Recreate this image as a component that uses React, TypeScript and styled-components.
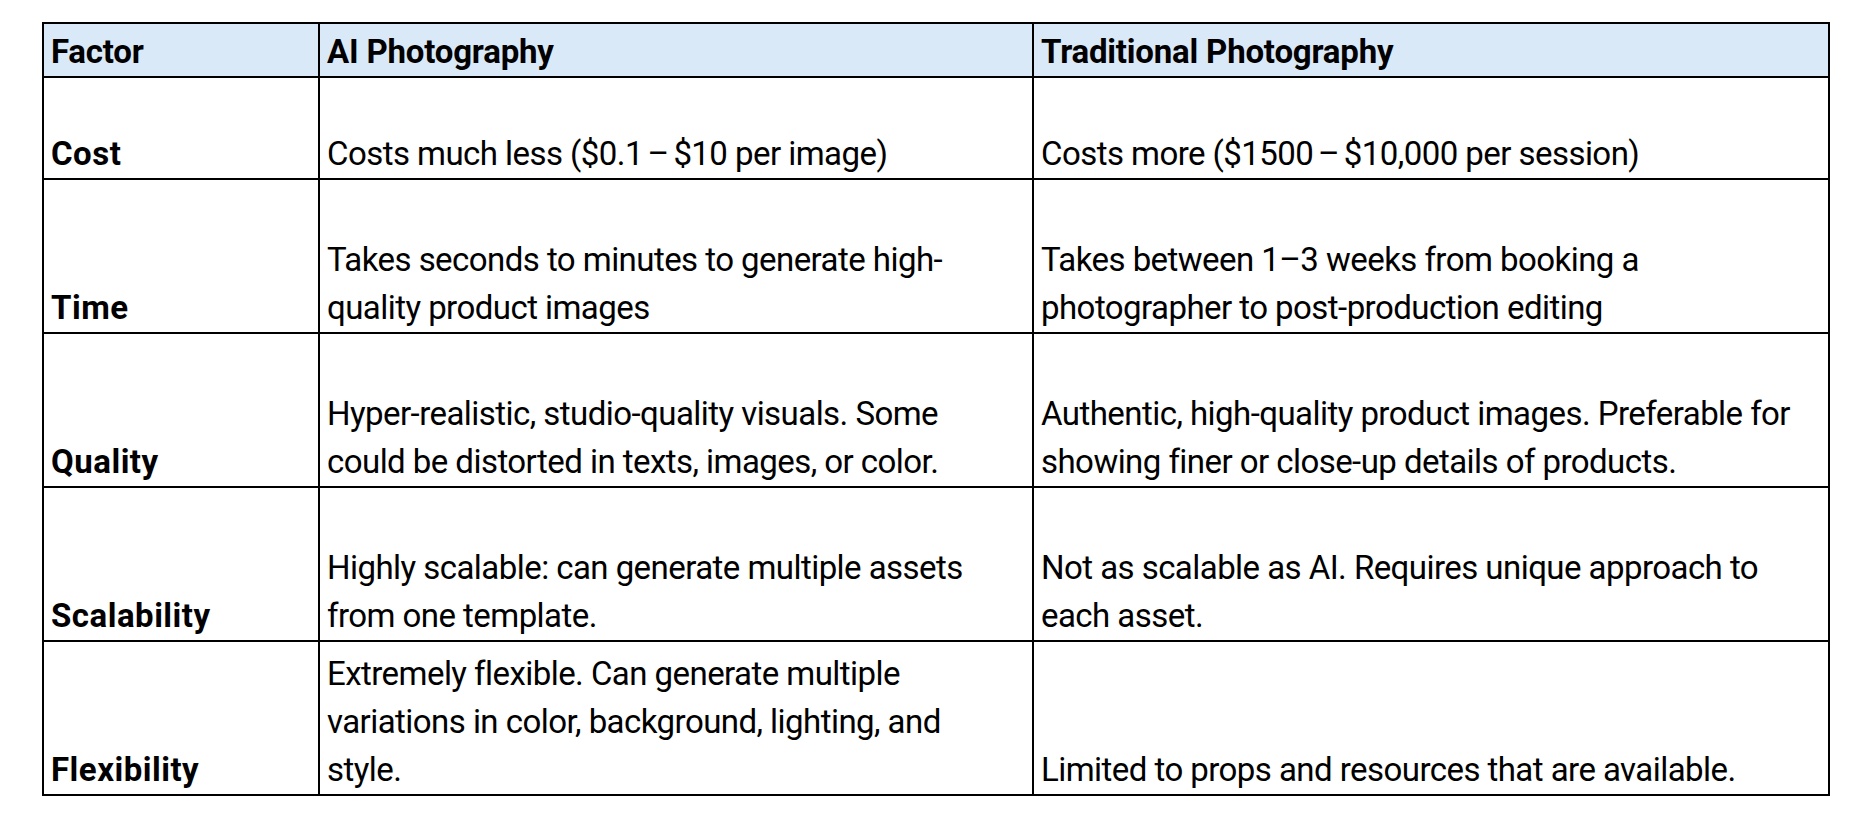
import { FC, ReactNode } from "react";
import styled, { createGlobalStyle } from "styled-components";

const GlobalStyle = createGlobalStyle`
  html, body {
    margin: 0;
    padding: 0;
    background: #ffffff;
  }
`;

const Page = styled.div`
  padding: 22px 0 0 42px;
  font-family: Roboto, "Liberation Sans", sans-serif;
  color: #000;
`;

const Table = styled.table`
  width: 1788px;
  table-layout: fixed;
  border-collapse: collapse;
  border: 2px solid #000;
  font-size: 33px;
`;

const HeadCell = styled.th`
  height: 52px;
  padding: 0 7px;
  background: #dae9f8;
  border: 2px solid #000;
  text-align: left;
  vertical-align: bottom;
  font-weight: 700;
  line-height: 48px;
  letter-spacing: -0.2px;
  white-space: nowrap;
`;

const BodyRow = styled.tr<{ $height: number }>`
  height: ${(p) => p.$height}px;
`;

const Cell = styled.td<{ $bold?: boolean }>`
  padding: 0 7px;
  border: 2px solid #000;
  vertical-align: bottom;
  line-height: 48px;
  white-space: nowrap;
  font-weight: ${(p) => (p.$bold ? 700 : 400)};
  letter-spacing: ${(p) => (p.$bold ? "0.5px" : "-0.55px")};
`;

const Line = styled.div`
  display: block;
`;

// the en dash between prices sits tighter than a normal word gap
const Dash = styled.span`
  word-spacing: -3px;
`;

// each cell's text is stored line by line so the wraps match the document
type Row = {
  factor: string;
  ai: ReactNode[];
  traditional: ReactNode[];
  height: number;
};

const rows: Row[] = [
  {
    factor: "Cost",
    ai: [
      <>
        Costs much less ($0.1<Dash> – </Dash>$10 per image)
      </>,
    ],
    traditional: [
      <>
        Costs more ($1500<Dash> – </Dash>$10,000 per session)
      </>,
    ],
    height: 102,
  },
  {
    factor: "Time",
    ai: ["Takes seconds to minutes to generate high-", "quality product images"],
    traditional: ["Takes between 1–3 weeks from booking a", "photographer to post-production editing"],
    height: 154,
  },
  {
    factor: "Quality",
    ai: ["Hyper-realistic, studio-quality visuals. Some", "could be distorted in texts, images, or color."],
    traditional: [
      "Authentic, high-quality product images. Preferable for",
      "showing finer or close-up details of products.",
    ],
    height: 154,
  },
  {
    factor: "Scalability",
    ai: ["Highly scalable: can generate multiple assets", "from one template."],
    traditional: ["Not as scalable as AI. Requires unique approach to", "each asset."],
    height: 154,
  },
  {
    factor: "Flexibility",
    ai: [
      "Extremely flexible. Can generate multiple",
      "variations in color, background, lighting, and",
      "style.",
    ],
    traditional: ["Limited to props and resources that are available."],
    height: 154,
  },
];

const Lines: FC<{ lines: ReactNode[] }> = ({ lines }) => (
  <>
    {lines.map((line, i) => (
      <Line key={i}>{line}</Line>
    ))}
  </>
);

const App: FC = () => {
  return (
    <Page>
      <GlobalStyle />
      <Table>
        <colgroup>
          <col style={{ width: 276 }} />
          <col style={{ width: 714 }} />
          <col style={{ width: 796 }} />
        </colgroup>
        <thead>
          <tr>
            <HeadCell>Factor</HeadCell>
            <HeadCell>AI Photography</HeadCell>
            <HeadCell>Traditional Photography</HeadCell>
          </tr>
        </thead>
        <tbody>
          {rows.map((row) => (
            <BodyRow key={row.factor} $height={row.height}>
              <Cell $bold>{row.factor}</Cell>
              <Cell>
                <Lines lines={row.ai} />
              </Cell>
              <Cell>
                <Lines lines={row.traditional} />
              </Cell>
            </BodyRow>
          ))}
        </tbody>
      </Table>
    </Page>
  );
};

export default App;
